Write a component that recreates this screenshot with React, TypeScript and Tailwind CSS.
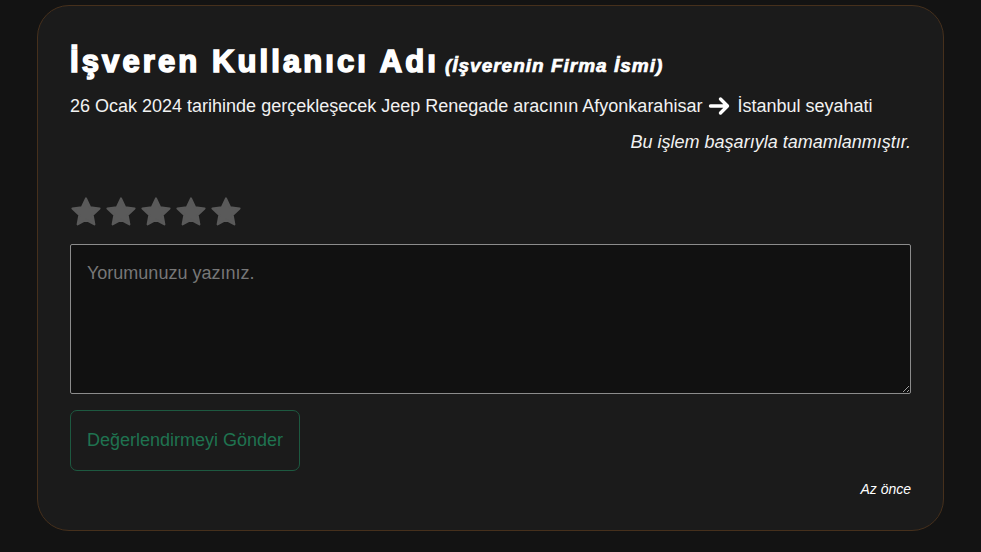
import React from "react";

function Star() {
  return (
    <svg viewBox="0 0 24 24" className="w-[32px] h-[32px]" fill="#5a5a5a">
      <path d="M12 1.8l3.1 6.6 7.1.9-5.2 4.9 1.3 7.1L12 17.9l-6.3 3.4 1.3-7.1L1.8 9.3l7.1-.9z" strokeLinejoin="round" stroke="#5a5a5a" strokeWidth="1.5" />
    </svg>
  );
}

export default function App() {
  return (
    <div className="min-h-[552px] w-full bg-[#131313] px-[37px] pt-[5px] pb-[20px] font-['Liberation_Sans',Arial,sans-serif]">
      <div className="rounded-[32px] border border-[#46301c] bg-[#1b1b1b] px-[32px] pt-[36px] pb-[31px] text-white">
        <h1 className="flex items-baseline gap-[6px]">
          <span className="text-[31px] font-bold leading-[40px] tracking-[3.1px] [-webkit-text-stroke:1.6px_white]">İşveren Kullanıcı Adı</span>
          <span className="text-[19px] font-bold italic tracking-[1px] [-webkit-text-stroke:0.7px_white]">(İşverenin Firma İsmi)</span>
        </h1>
        <p className="mt-[12px] flex items-center text-[18px] leading-[24px] text-[#f2f2f2]">
          26 Ocak 2024 tarihinde gerçekleşecek Jeep Renegade aracının Afyonkarahisar
          <svg viewBox="0 0 24 24" className="mx-[5px] h-[24px] w-[25px]" fill="none" stroke="white" strokeWidth="3.4" strokeLinecap="round" strokeLinejoin="round">
            <path d="M3 12h17M13 5l7 7-7 7" />
          </svg>
          İstanbul seyahati
        </p>
        <p className="mt-[12px] text-right text-[18px] italic leading-[24px] text-[#f2f2f2]">Bu işlem başarıyla tamamlanmıştır.</p>
        <div className="mt-[42px] flex gap-[3px]">
          <Star />
          <Star />
          <Star />
          <Star />
          <Star />
        </div>
        <textarea
          placeholder="Yorumunuzu yazınız."
          className="mt-[16px] block h-[150px] w-full resize-y rounded-[2px] border border-[#8c8c8c] bg-[#111111] px-[16px] py-[16px] text-[18px] leading-[24px] text-white placeholder:text-[#777777] outline-none"
        />
        <button className="mt-[16px] h-[61px] w-[230px] rounded-[7px] border border-[#1d5940] bg-transparent text-[18px] text-[#1f7350]">
          Değerlendirmeyi Gönder
        </button>
        <p className="mt-[8px] text-right text-[14px] leading-[20px] italic text-white">Az önce</p>
      </div>
    </div>
  );
}
